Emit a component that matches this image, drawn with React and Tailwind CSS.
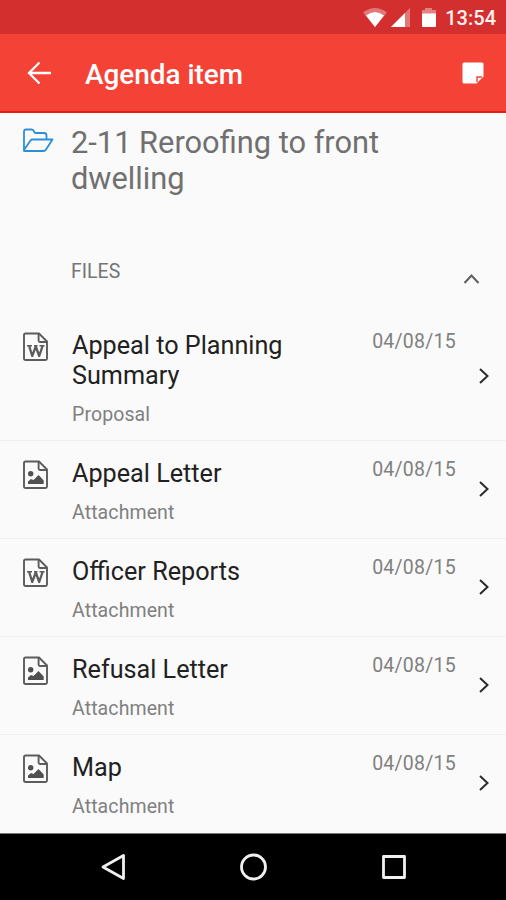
import React, { useState } from 'react';

const FILES = [
    { id: 1, name: 'Appeal to Planning Summary', type: 'Proposal', date: '04/08/15', icon: 'word' },
    { id: 2, name: 'Appeal Letter', type: 'Attachment', date: '04/08/15', icon: 'image' },
    { id: 3, name: 'Officer Reports', type: 'Attachment', date: '04/08/15', icon: 'word' },
    { id: 4, name: 'Refusal Letter', type: 'Attachment', date: '04/08/15', icon: 'image' },
    { id: 5, name: 'Map', type: 'Attachment', date: '04/08/15', icon: 'image' },
];

const FileIcon = ({ type }) => (
    <svg width="26" height="30" viewBox="0 0 26 30" fill="none" stroke="#5c5c5c" strokeWidth="1.9" strokeLinejoin="round">
        <path d="M2.5 1.5H16L24 9.5V26.5Q24 28 22.5 28H2.5Q1 28 1 26.5V3Q1 1.5 2.5 1.5Z" />
        <path d="M15.6 1.8V8.5Q15.6 10 17 10H23.8" />
        {type === 'word' ? (
            <>
                <path d="M4 13.7H9M11 13.7H14.5M16.5 13.7H21.5" strokeWidth="1.6" />
                <path d="M6.2 14L9.2 24L12.8 14.5L16.2 24L19.6 14" strokeWidth="2.3" />
            </>
        ) : (
            <>
                <circle cx="7.7" cy="13.7" r="2.7" fill="#505050" stroke="none" />
                <path d="M5 24V21.5L8 19L10.5 20L15.5 15L20.7 20.5V24Z" fill="#505050" stroke="none" />
            </>
        )}
    </svg>
);

const StatusBar = () => (
    <div className="h-[34px] shrink-0 bg-[#d32f2f] flex items-center justify-end pr-[10px] pt-[2px]">
        <svg width="76" height="22" viewBox="0 0 76 22" fill="#fff">
            <path d="M0 5.5Q12 -3.5 24 5.5L12 20Z" opacity="0.35" />
            <path d="M3 8.5Q12 1.5 21 8.5L12 20Z" />
            <path d="M47 1V20H28Z" opacity="0.35" />
            <path d="M42 6V20H28Z" />
            <path d="M62 1H69V3H73V7H59V3H62Z" opacity="0.4" />
            <path d="M59 6.5H73V19Q73 20 72 20H60Q59 20 59 19Z" />
        </svg>
        <span className="ml-[6px] text-[20px] leading-6 font-medium text-[#fff0f0]">13:54</span>
    </div>
);

const AppBar = () => (
    <div className="h-[79px] shrink-0 bg-[#f44336] border-b-2 border-[#e51c18] flex items-center pl-[27px] pr-[22px]">
        <svg width="25" height="24" viewBox="0 0 25 24" fill="none" stroke="#fff" strokeWidth="2.3">
            <path d="M24 12H2M12.5 1.5L2 12L12.5 22.5" />
        </svg>
        <h1 className="ml-[33px] mt-1 text-[27.9px] leading-8 font-medium text-white grow">Agenda item</h1>
        <svg width="22" height="22" viewBox="0 0 22 22">
            <path d="M2 0.5H20Q21.5 0.5 21.5 2V14.5L14.5 21.5H2Q0.5 21.5 0.5 20V2Q0.5 0.5 2 0.5Z" fill="#fff" />
            <path d="M15 20V15H20" fill="none" stroke="#f44336" strokeWidth="1.4" />
        </svg>
    </div>
);

const FileRow = ({ file }) => (
    <li className="flex pl-[23px] pr-[15px] border-b border-[#eeeeee] last:border-b-0">
        <div className="pt-[19px] w-[49px] shrink-0">
            <FileIcon type={file.icon} />
        </div>
        <div className="grow pt-[18px] pb-[13px]">
            <p className="w-[240px] text-[25.2px] leading-[30px] text-[#212121]">{file.name}</p>
            <p className="mt-3 text-[19.5px] leading-6 tracking-[0.1px] text-[#808080]">{file.type}</p>
        </div>
        <span className="pt-[17px] text-[19.5px] leading-6 tracking-[0.25px] text-[#808080]">{file.date}</span>
        <svg className="self-center mb-px ml-[21px] shrink-0" width="14" height="16" viewBox="0 0 14 16" fill="none" stroke="#2b2b2b" strokeWidth="2">
            <path d="M3 1L10.5 8L3 15" />
        </svg>
    </li>
);

const NavBar = () => (
    <div className="h-[67px] shrink-0 bg-black border-t border-[#757575] flex justify-center">
        <svg width="306" height="66" viewBox="0 0 306 66" fill="none" stroke="#f0f0f0" strokeWidth="2.8" strokeLinejoin="round">
            <path d="M23.5 21.5V44.5L3 33Z" />
            <circle cx="153.5" cy="33" r="12" />
            <rect x="283.5" y="22.5" width="21" height="21" />
        </svg>
    </div>
);

function App() {
    const [open, setOpen] = useState(true);

    return (
        <div className="h-[900px] w-full flex flex-col bg-[#fafafa] font-['Roboto',sans-serif] overflow-hidden">
            <StatusBar />
            <AppBar />
            <main className="grow">
                <div className="h-[125px] flex pl-[22px]">
                    <svg className="mt-[15px] shrink-0" width="32" height="25" viewBox="0 0 32 25" fill="none" stroke="#2d8fd5" strokeWidth="1.8" strokeLinejoin="round">
                        <path d="M2 22V3.5Q2 1.5 4 1.5H9.5Q11.5 1.5 12 3.5Q12.4 5 14 5H22Q24.5 5 24.5 7.5V11.5" />
                        <path d="M2 22L8.5 12.5Q9.2 11.5 10.5 11.5H30.5L24 21.5Q23 23 21.5 23H3Q1.5 23 2 22Z" />
                    </svg>
                    <h2 className="ml-[17px] w-[350px] pt-[12px] text-[30.8px] leading-[36px] text-[#707070]">2-11 Reroofing to front dwelling</h2>
                </div>
                <button
                    className="w-full h-[75px] flex items-start justify-between pl-[71px] pr-[26px] cursor-pointer"
                    onClick={() => setOpen(!open)}
                >
                    <span className="pt-[22px] text-[19.5px] leading-6 text-[#757575]">FILES</span>
                    <svg className={open ? 'mt-[35px]' : 'mt-[35px] rotate-180'} width="17" height="12" viewBox="0 0 17 12" fill="none" stroke="#616161" strokeWidth="2.1">
                        <path d="M1.5 10L8.5 2.5L15.5 10" />
                    </svg>
                </button>
                {open && (
                    <ul>
                        {FILES.map((file) => (
                            <FileRow key={file.id} file={file} />
                        ))}
                    </ul>
                )}
            </main>
            <NavBar />
        </div>
    );
}

export default App;
